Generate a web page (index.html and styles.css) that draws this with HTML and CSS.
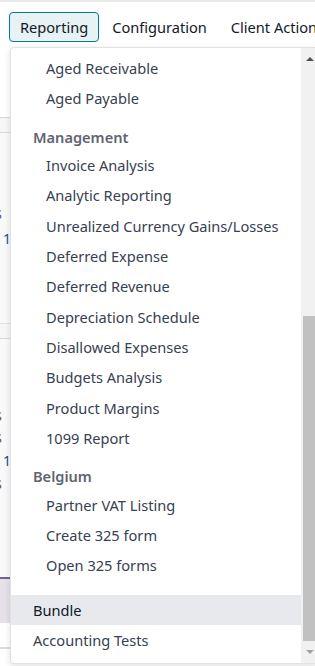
FILE: index.html
```html
<!DOCTYPE html>
<html lang="en">
<head>
  <meta charset="UTF-8" />
  <meta name="viewport" content="width=device-width, initial-scale=1.0">
  <title>Accounting - Reporting</title>
  <link rel="stylesheet" href="styles.css">
</head>
<body>
  <div class="page">
    <nav class="topbar">
      <button class="nav-btn active">Reporting</button>
      <button class="nav-btn">Configuration</button>
      <button class="nav-btn">Client Actions</button>
    </nav>

    <!-- what is left of the list view behind the open menu -->
    <div class="backdrop">
      <div class="bd-head"></div>
      <div class="bd-sub"></div>
      <div class="bd-rows">
        <div class="amt amt-purple">$ 1,250.00</div>
        <div class="amt amt-blue">1</div>
      </div>
      <div class="bd-sub"></div>
      <div class="bd-rows bd-rows-2">
        <div class="amt amt-orange">$ 30.00</div>
        <div class="amt amt-orange">$ 12.00</div>
        <div class="amt amt-blue">1</div>
        <div class="amt amt-orange">$ 42.00</div>
      </div>
      <div class="bd-chat"></div>
      <div class="bd-foot"></div>
    </div>

    <div class="dropdown">
      <ul class="menu">
        <li class="item sub">Aged Receivable</li>
        <li class="item sub">Aged Payable</li>
        <li class="header">Management</li>
        <li class="item sub">Invoice Analysis</li>
        <li class="item sub">Analytic Reporting</li>
        <li class="item sub">Unrealized Currency Gains/Losses</li>
        <li class="item sub">Deferred Expense</li>
        <li class="item sub">Deferred Revenue</li>
        <li class="item sub">Depreciation Schedule</li>
        <li class="item sub">Disallowed Expenses</li>
        <li class="item sub">Budgets Analysis</li>
        <li class="item sub">Product Margins</li>
        <li class="item sub">1099 Report</li>
        <li class="header">Belgium</li>
        <li class="item sub">Partner VAT Listing</li>
        <li class="item sub">Create 325 form</li>
        <li class="item sub">Open 325 forms</li>
        <li class="divider"></li>
        <li class="item hover">Bundle</li>
        <li class="item">Accounting Tests</li>
      </ul>
      <div class="scrollbar">
        <span class="arrow up"></span>
        <div class="track"><div class="thumb"></div></div>
        <span class="arrow down"></span>
      </div>
    </div>
  </div>
</body>
</html>
```

FILE: styles.css
```css
:root {
  --text: #374151;
  --text-dark: #111827;
  --muted: #5f6470;
  --teal: #017e84;
  --teal-bg: #e6f2f3;
  --hover: #e7e9ed;
  --line: #dee2e6;
}

* {
  box-sizing: border-box;
}

body {
  margin: 0;
  font-family: "Noto Sans", "Open Sans", Arial, sans-serif;
  color: var(--text);
  background: #fff;
}

.page {
  position: relative;
  width: 315px;
  height: 666px;
  overflow: hidden;
  border-top: 2px solid #e9e9e9;
}

/* top menu */
.topbar {
  display: flex;
  align-items: flex-start;
  gap: 2px;
  height: 44px;
  padding: 10px 0 0 9px;
  white-space: nowrap;
}

.nav-btn {
  font-family: inherit;
  font-size: 14.6px;
  color: var(--text-dark);
  background: none;
  border: 1px solid transparent;
  border-radius: 4px;
  height: 30px;
  padding: 0 10px;
  flex-shrink: 0;
}

.nav-btn.active {
  background: var(--teal-bg);
  border-color: var(--teal);
}

/* background list view */
.backdrop {
  display: flex;
  flex-direction: column;
  font-size: 14px;
}

.bd-head {
  height: 72px;
  border-bottom: 1px solid #d8d8d8;
}

.bd-sub {
  height: 15px;
  background: #f6f6f6;
  border-bottom: 1px solid #d8d8d8;
}

.bd-rows {
  height: 191px;
  background: #f9f9f9;
  padding-top: 70px;
  border-bottom: 1px solid #e0e0e0;
}

.bd-rows-2 {
  height: 238px;
  padding-top: 66px;
  border-bottom: none;
}

.amt {
  height: 24px;
  line-height: 24px;
  margin-left: -6px;
  word-spacing: 8px;
  white-space: nowrap;
}

.amt-blue {
  color: #264a8a;
  margin-left: 3px;
}

.amt-purple {
  color: #5b4d9b;
}

.amt-orange {
  color: #6b5a3a;
  height: 22px;
}

.bd-chat {
  height: 46px;
  background: #e6e0e8;
  border-top: 2px solid #71639e;
}

.bd-foot {
  height: 26px;
  border-bottom: 2px solid #dcdcdc;
}

/* open dropdown */
.dropdown {
  position: absolute;
  left: 10px;
  top: 45px;
  width: 309px;
  height: 617px;
  display: flex;
  background: #fff;
  border: 1px solid #e0e2e6;
  border-radius: 4px;
  box-shadow: 0 2px 6px rgba(0, 0, 0, 0.12);
  overflow: hidden;
}

.menu {
  list-style: none;
  margin: 0;
  padding: 5px 0 0;
  flex: 1;
  font-size: 14.6px;
}

.item {
  padding: 4px 0 4px 22px;
  line-height: 22.33px;
  white-space: nowrap;
}

.item.sub {
  padding-left: 35px;
}

.item.hover {
  background: var(--hover);
  color: var(--text-dark);
}

.header {
  margin-top: 8px;
  padding: 4px 0 2px 22px;
  line-height: 22.33px;
  font-weight: 600;
  color: var(--muted);
}

.divider {
  height: 14px;
}

/* fake scrollbar, scrolled to the bottom */
.scrollbar {
  width: 17px;
  display: flex;
  flex-direction: column;
  align-items: center;
  background: #f1f1f1;
}

.arrow {
  width: 0;
  height: 0;
  border-left: 4px solid transparent;
  border-right: 4px solid transparent;
  margin: 9px 0;
}

.arrow.up {
  border-bottom: 4px solid #505050;
}

.arrow.down {
  border-top: 4px solid #a3a3a3;
}

.track {
  flex: 1;
  width: 100%;
  display: flex;
  flex-direction: column;
  justify-content: flex-end;
  padding: 0 2px;
}

.thumb {
  height: 325px;
  background: #c1c1c1;
}
```
